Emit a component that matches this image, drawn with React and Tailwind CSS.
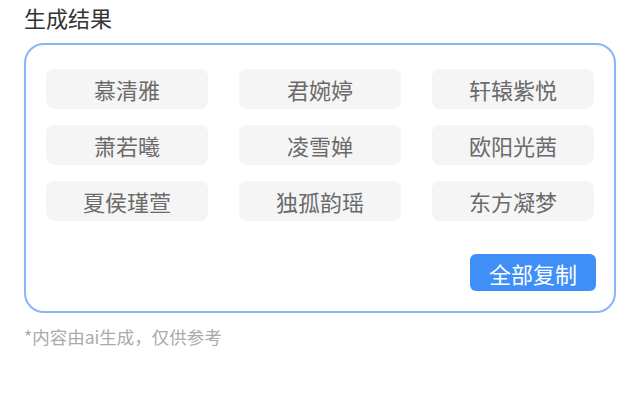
import React from 'react';

const names = ['慕清雅', '君婉婷', '轩辕紫悦', '萧若曦', '凌雪婵', '欧阳光茜', '夏侯瑾萱', '独孤韵瑶', '东方凝梦'];

const App = () => {
    return (
        <div className="w-[640px] h-[400px] bg-white pl-6 pr-[24px] pt-[2px] font-['Noto_Sans_CJK_SC','Noto_Sans',sans-serif]">
            <h2 className="text-[22px] leading-[30px] text-[#333]">生成结果</h2>
            <div className="mt-[11px] border-2 border-[#8ab6f7] rounded-[20px] pl-5 pr-5 pt-6 pb-5">
                <div className="grid grid-cols-3 gap-x-[31px] gap-y-4">
                    {names.map((n) => (
                        <div key={n} className="h-10 rounded-lg bg-[#f5f5f5] flex items-center justify-center text-[22px] text-[#6a6a6a]">
                            {n}
                        </div>
                    ))}
                </div>
                <div className="flex justify-end mt-[33px] -mr-[2px]">
                    <button className="w-[126px] h-[37px] rounded-md bg-[#3f8ff7] text-white text-[22px] leading-none flex items-center justify-center">
                        全部复制
                    </button>
                </div>
            </div>
            <p className="mt-[12px] text-[17.5px] leading-[24px] text-[#aaa]">*内容由ai生成，仅供参考</p>
        </div>
    );
};

export default App;
